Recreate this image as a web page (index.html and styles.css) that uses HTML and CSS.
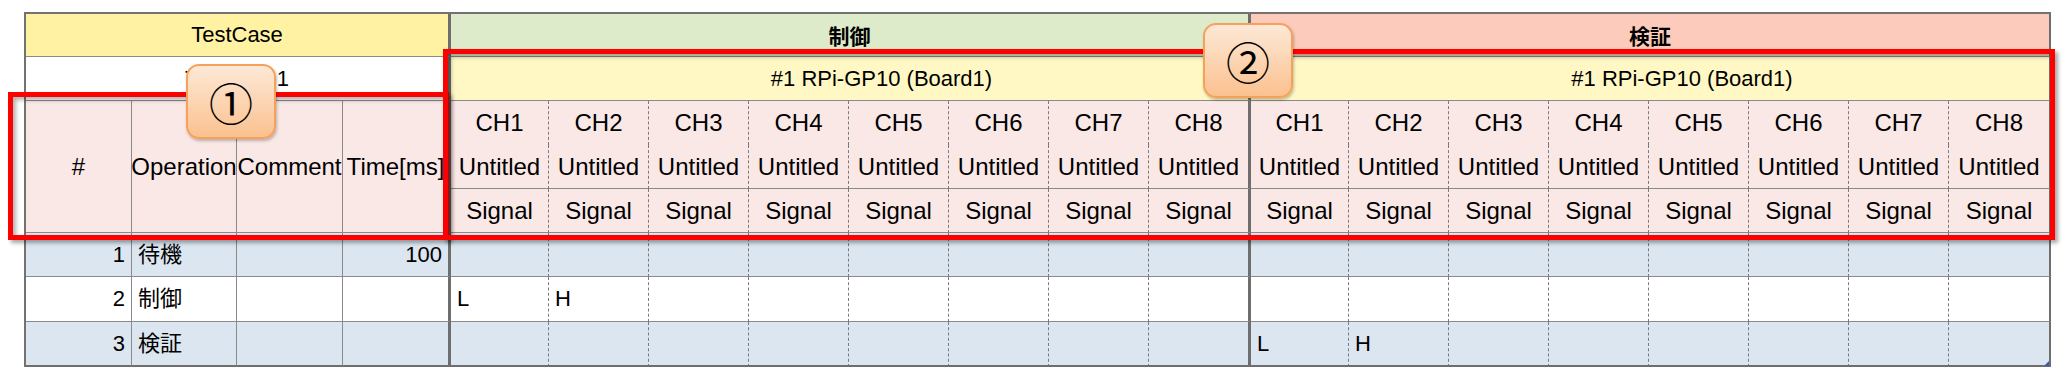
FILE: index.html
```html
<!DOCTYPE html>
<html lang="ja">
<head>
<meta charset="utf-8">
<title>TestCase</title>
<link rel="stylesheet" href="styles.css">
</head>
<body>
<div class="page">
  <div class="sheet">
    <!-- row 1 -->
    <div class="c top tc-head span4 sep">TestCase</div>
    <div class="c top ctrl-head span8 sep bold">制御</div>
    <div class="c top chk-head span8 end bold">検証</div>
    <!-- row 2 -->
    <div class="c top tc-name span4 sep">TestCase1</div>
    <div class="c top board span8 sep">#1 RPi-GP10 (Board1)</div>
    <div class="c top board span8 end">#1 RPi-GP10 (Board1)</div>
    <!-- rows 3-5 : header -->
    <div class="c hd rs3">#</div>
    <div class="c hd rs3">Operation</div>
    <div class="c hd rs3">Comment</div>
    <div class="c hd rs3 sep">Time[ms]</div>

    <div class="c hd nob dash">CH1</div>
    <div class="c hd nob dash">CH2</div>
    <div class="c hd nob dash">CH3</div>
    <div class="c hd nob dash">CH4</div>
    <div class="c hd nob dash">CH5</div>
    <div class="c hd nob dash">CH6</div>
    <div class="c hd nob dash">CH7</div>
    <div class="c hd nob sep">CH8</div>
    <div class="c hd nob dash">CH1</div>
    <div class="c hd nob dash">CH2</div>
    <div class="c hd nob dash">CH3</div>
    <div class="c hd nob dash">CH4</div>
    <div class="c hd nob dash">CH5</div>
    <div class="c hd nob dash">CH6</div>
    <div class="c hd nob dash">CH7</div>
    <div class="c hd nob end">CH8</div>

    <div class="c hd dash">Untitled</div>
    <div class="c hd dash">Untitled</div>
    <div class="c hd dash">Untitled</div>
    <div class="c hd dash">Untitled</div>
    <div class="c hd dash">Untitled</div>
    <div class="c hd dash">Untitled</div>
    <div class="c hd dash">Untitled</div>
    <div class="c hd sep">Untitled</div>
    <div class="c hd dash">Untitled</div>
    <div class="c hd dash">Untitled</div>
    <div class="c hd dash">Untitled</div>
    <div class="c hd dash">Untitled</div>
    <div class="c hd dash">Untitled</div>
    <div class="c hd dash">Untitled</div>
    <div class="c hd dash">Untitled</div>
    <div class="c hd end">Untitled</div>

    <div class="c hd dash">Signal</div>
    <div class="c hd dash">Signal</div>
    <div class="c hd dash">Signal</div>
    <div class="c hd dash">Signal</div>
    <div class="c hd dash">Signal</div>
    <div class="c hd dash">Signal</div>
    <div class="c hd dash">Signal</div>
    <div class="c hd sep">Signal</div>
    <div class="c hd dash">Signal</div>
    <div class="c hd dash">Signal</div>
    <div class="c hd dash">Signal</div>
    <div class="c hd dash">Signal</div>
    <div class="c hd dash">Signal</div>
    <div class="c hd dash">Signal</div>
    <div class="c hd dash">Signal</div>
    <div class="c hd end">Signal</div>

    <!-- data row 1 -->
    <div class="c d blue num">1</div>
    <div class="c d blue txt">待機</div>
    <div class="c d blue"></div>
    <div class="c d blue num sep">100</div>
    <div class="c d blue dash"></div><div class="c d blue dash"></div><div class="c d blue dash"></div><div class="c d blue dash"></div>
    <div class="c d blue dash"></div><div class="c d blue dash"></div><div class="c d blue dash"></div><div class="c d blue sep"></div>
    <div class="c d blue dash"></div><div class="c d blue dash"></div><div class="c d blue dash"></div><div class="c d blue dash"></div>
    <div class="c d blue dash"></div><div class="c d blue dash"></div><div class="c d blue dash"></div><div class="c d blue end"></div>

    <!-- data row 2 -->
    <div class="c d white num">2</div>
    <div class="c d white txt">制御</div>
    <div class="c d white"></div>
    <div class="c d white num sep"></div>
    <div class="c d white dash txt">L</div><div class="c d white dash txt">H</div><div class="c d white dash"></div><div class="c d white dash"></div>
    <div class="c d white dash"></div><div class="c d white dash"></div><div class="c d white dash"></div><div class="c d white sep"></div>
    <div class="c d white dash"></div><div class="c d white dash"></div><div class="c d white dash"></div><div class="c d white dash"></div>
    <div class="c d white dash"></div><div class="c d white dash"></div><div class="c d white dash"></div><div class="c d white end"></div>

    <!-- data row 3 -->
    <div class="c d blue last num">3</div>
    <div class="c d blue last txt">検証</div>
    <div class="c d blue last"></div>
    <div class="c d blue last num sep"></div>
    <div class="c d blue last dash"></div><div class="c d blue last dash"></div><div class="c d blue last dash"></div><div class="c d blue last dash"></div>
    <div class="c d blue last dash"></div><div class="c d blue last dash"></div><div class="c d blue last dash"></div><div class="c d blue last sep"></div>
    <div class="c d blue last dash txt">L</div><div class="c d blue last dash txt">H</div><div class="c d blue last dash"></div><div class="c d blue last dash"></div>
    <div class="c d blue last dash"></div><div class="c d blue last dash"></div><div class="c d blue last dash"></div><div class="c d blue last end"></div>
  </div>

  <span class="corner"></span>

  <div class="frame frame1"></div>
  <div class="frame frame2"></div>

  <div class="badge badge1">①</div>
  <div class="badge badge2">②</div>
</div>
</body>
</html>
```

FILE: styles.css
```css
html, body {
  margin: 0;
  padding: 0;
  background: #ffffff;
}

.page {
  position: relative;
  width: 2065px;
  height: 377px;
  font-family: "Liberation Sans", "Noto Sans CJK JP", sans-serif;
  color: #000;
}

.sheet {
  position: absolute;
  left: 24px;
  top: 12px;
  display: grid;
  grid-template-columns: 106px 105px 106px 108px 98px 100px 100px 100px 100px 100px 100px 102px 98px 100px 100px 100px 100px 100px 100px 102px;
  grid-template-rows: 43px 44px 44px 44px 44px 44px 45px 45px;
  border-top: 2px solid #727272;
  border-left: 2px solid #727272;
}

.c {
  box-sizing: border-box;
  border-right: 1px solid #8a8a8a;
  border-bottom: 1px solid #8a8a8a;
  display: flex;
  align-items: center;
  justify-content: center;
  white-space: nowrap;
  overflow: visible;
  font-size: 24px;
  line-height: 1;
}

.span4 { grid-column: span 4; }
.span8 { grid-column: span 8; }
.rs3 { grid-row: span 3; }

.dash { border-right: 1px dashed #7a7a7a; }
.sep { border-right: 3px solid #6e6e6e; }
.end { border-right: 2px solid #6e6e6e; }
.nob { border-bottom: none; }
.last { border-bottom: 2px solid #6e6e6e; }

.top { font-size: 22px; }
.bold { font-weight: bold; font-family: "Noto Sans CJK JP", sans-serif; font-size: 21px; }

.tc-head { background: #fff2a3; }
.ctrl-head { background: #deebca; }
.chk-head { background: #fccbbb; }
.tc-name { background: #ffffff; }
.board { background: #fff8c4; padding-left: 64px; }

.hd { background: #fae8e6; }

.d { font-size: 22px; }
.blue { background: #dce6f1; }
.white { background: #ffffff; }
.num { justify-content: flex-end; padding-right: 6px; }
.txt { justify-content: flex-start; padding-left: 6px; font-family: "Liberation Sans", "Noto Sans CJK JP", sans-serif; }

.corner {
  position: absolute;
  left: 2044px;
  top: 361px;
  width: 0;
  height: 0;
  border-left: 5px solid transparent;
  border-bottom: 5px solid #3b57b5;
}

.frame {
  position: absolute;
  box-sizing: border-box;
  border: 5px solid #ff0000;
  box-shadow: 3px 3px 4px rgba(0, 0, 0, 0.35), inset 3px 3px 4px rgba(0, 0, 0, 0.3);
}

.frame1 {
  left: 8px;
  top: 92px;
  width: 441px;
  height: 148px;
}

.frame2 {
  left: 443px;
  top: 49px;
  width: 1612px;
  height: 191px;
}

.badge {
  position: absolute;
  box-sizing: border-box;
  width: 90px;
  height: 75px;
  border: 2px solid #f5a15a;
  border-radius: 13px;
  background: linear-gradient(to bottom, #fde8d6 0%, #fcd5b3 50%, #fbc18f 100%);
  box-shadow: 1px 2px 3px rgba(0, 0, 0, 0.25);
  display: flex;
  align-items: center;
  justify-content: center;
  font-family: "Noto Sans CJK JP", sans-serif;
  font-size: 44px;
  line-height: 1;
  color: #000;
}

.badge1 { left: 186px; top: 64px; }
.badge2 { left: 1203px; top: 23px; }
```
